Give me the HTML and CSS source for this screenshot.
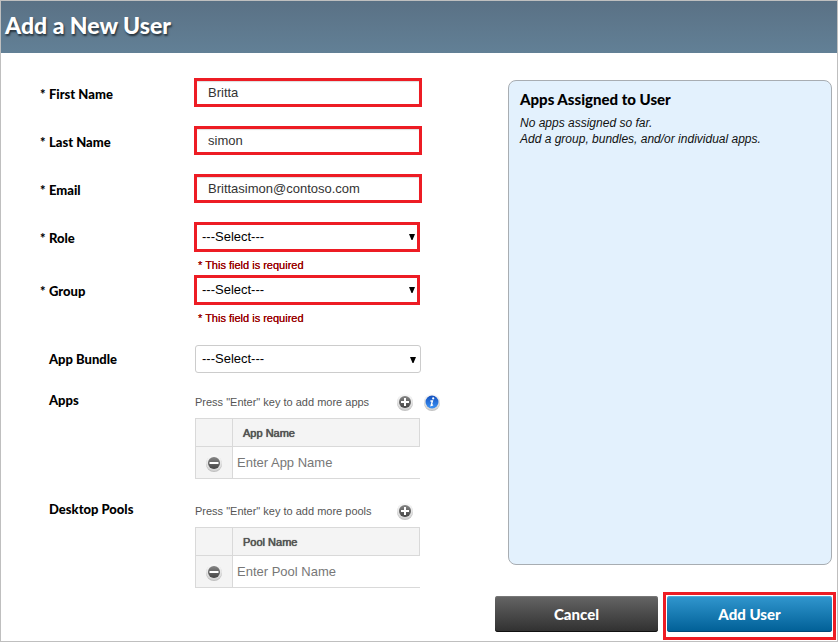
FILE: index.html
```html
<!DOCTYPE html>
<html lang="en">
<head>
<meta charset="utf-8">
<title>Add a New User</title>
<link rel="stylesheet" href="styles.css">
</head>
<body>
<svg class="defs" width="0" height="0" aria-hidden="true">
  <defs>
    <linearGradient id="rim" x1="0" y1="0" x2="0" y2="1"><stop offset="0" stop-color="#fafafa"/><stop offset="1" stop-color="#d2d2d2"/></linearGradient>
    <linearGradient id="dark" x1="0" y1="0" x2="0" y2="1"><stop offset="0" stop-color="#858585"/><stop offset="1" stop-color="#444"/></linearGradient>
    <linearGradient id="blue" x1="0" y1="0" x2="0" y2="1"><stop offset="0" stop-color="#1450bd"/><stop offset="1" stop-color="#3b92f5"/></linearGradient>
    <g id="ring"><circle cx="9" cy="10" r="8" fill="#999" opacity=".6"/><circle cx="9" cy="9" r="8" fill="url(#rim)"/></g>
    <symbol id="plus" viewBox="0 0 18 18"><use href="#ring"/><circle cx="9" cy="9" r="6" fill="url(#dark)"/><path d="M9 5v8M5 9h8" stroke="#fff" stroke-width="2"/></symbol>
    <symbol id="minus" viewBox="0 0 18 18"><use href="#ring"/><circle cx="9" cy="9" r="6" fill="url(#dark)"/><path d="M4.5 9h9" stroke="#fff" stroke-width="2"/></symbol>
    <symbol id="info" viewBox="0 0 18 18"><use href="#ring"/><circle cx="9" cy="9" r="6.5" fill="url(#blue)"/><circle cx="10.2" cy="5.4" r="1.1" fill="#fff"/><path d="M7.4 8h2l-1.2 4.4 1.9-.5" fill="none" stroke="#fff" stroke-width="1.4"/></symbol>
    <symbol id="arrow" viewBox="0 0 6 6"><path d="M0 0h6L3.5 6h-1z"/></symbol>
  </defs>
</svg>
<header class="page-header"><h1>Add a New User</h1></header>
<main class="layout">
  <form class="user-form" id="user-form">
    <div class="row">
      <label for="first"><span class="star">*</span>First Name</label>
      <div class="field"><input class="control marked" id="first" type="text" value="Britta"></div>
    </div>
    <div class="row">
      <label for="last"><span class="star">*</span>Last Name</label>
      <div class="field"><input class="control marked" id="last" type="text" value="simon"></div>
    </div>
    <div class="row">
      <label for="email"><span class="star">*</span>Email</label>
      <div class="field"><input class="control marked" id="email" type="text" value="Brittasimon@contoso.com"></div>
    </div>
    <div class="row">
      <label for="role"><span class="star">*</span>Role</label>
      <div class="field">
        <div class="select"><select class="control marked" id="role"><option>---Select---</option></select><svg class="arrow"><use href="#arrow"/></svg></div>
        <p class="error">* This field is required</p>
      </div>
    </div>
    <div class="row">
      <label for="group"><span class="star">*</span>Group</label>
      <div class="field">
        <div class="select"><select class="control marked" id="group"><option>---Select---</option></select><svg class="arrow"><use href="#arrow"/></svg></div>
        <p class="error">* This field is required</p>
      </div>
    </div>
    <div class="row row-bundle">
      <label for="bundle"><span class="star"></span>App Bundle</label>
      <div class="field">
        <div class="select"><select class="control" id="bundle"><option>---Select---</option></select><svg class="arrow"><use href="#arrow"/></svg></div>
      </div>
    </div>
    <div class="row row-list">
      <label for="app"><span class="star"></span>Apps</label>
      <div class="field">
        <div class="hint"><span class="hint-text">Press "Enter" key to add more apps</span><button type="button" class="icon" aria-label="Add app"><svg><use href="#plus"/></svg></button><button type="button" class="icon" aria-label="About apps"><svg><use href="#info"/></svg></button></div>
        <table class="list">
          <thead><tr><th class="tool"></th><th>App Name</th></tr></thead>
          <tbody><tr><td class="tool"><button type="button" class="icon" aria-label="Remove app"><svg><use href="#minus"/></svg></button></td><td><input id="app" type="text" placeholder="Enter App Name"></td></tr></tbody>
        </table>
      </div>
    </div>
    <div class="row row-list">
      <label for="pool"><span class="star"></span>Desktop Pools</label>
      <div class="field">
        <div class="hint"><span class="hint-text">Press "Enter" key to add more pools</span><button type="button" class="icon" aria-label="Add pool"><svg><use href="#plus"/></svg></button></div>
        <table class="list">
          <thead><tr><th class="tool"></th><th>Pool Name</th></tr></thead>
          <tbody><tr><td class="tool"><button type="button" class="icon" aria-label="Remove pool"><svg><use href="#minus"/></svg></button></td><td><input id="pool" type="text" placeholder="Enter Pool Name"></td></tr></tbody>
        </table>
      </div>
    </div>
  </form>
  <div class="side">
    <section class="panel">
      <h2>Apps Assigned to User</h2>
      <p>No apps assigned so far.<br>Add a group, bundles, and/or individual apps.</p>
    </section>
    <div class="actions">
      <button type="button" class="btn btn-dark">Cancel</button>
      <div class="highlight"><button type="submit" form="user-form" class="btn btn-blue">Add User</button></div>
    </div>
  </div>
</main>
</body>
</html>
```
FILE: styles.css
```css
* { box-sizing: border-box; }

body {
  display: flex;
  flex-direction: column;
  min-height: 100vh;
  margin: 0;
  border: 1px solid #bfbfbf;
  background: #fff;
  color: #000;
  font: 13px/16px "Liberation Sans", Arial, sans-serif;
}

h1, h2, p { margin: 0; }
input, select, button { font: inherit; }
.defs { position: absolute; }

.page-header {
  padding: 10px 4px 14px;
  background: linear-gradient(#5a7185, #628096);
}
.page-header h1 {
  color: #fff;
  font: 900 23px/28px Lato, sans-serif;
  text-shadow: 1px 2px 2px #26333d;
}

.layout { display: flex; flex: 1; }

.user-form { flex: 1; padding: 25px 0 0 39px; }

.row { display: flex; min-height: 48px; }
.row label {
  display: flex;
  width: 154px;
  flex: none;
  padding-top: 8px;
  font: 900 13px/16px Lato, sans-serif;
}
.star { width: 9px; flex: none; }
.field { flex: 1; max-width: 246px; }

.control {
  display: block;
  width: 228px;
  height: 28px;
  padding: 0 11px;
  border: 1px solid #ccc;
  border-radius: 3px;
  background: #fff;
  color: #333;
}
.marked {
  height: 29px;
  border: 3px solid #ed1c24;
  border-radius: 0;
  box-shadow: inset 0 1px 1px #ddd;
}
.select { position: relative; width: 226px; }
.select .control {
  width: 100%;
  appearance: none;
  padding: 0 5px;
  color: #000;
}
.select .marked { height: 30px; box-shadow: none; }
.arrow {
  position: absolute;
  top: 12px;
  right: 5px;
  width: 6px;
  height: 6px;
  pointer-events: none;
}
.error {
  padding: 5px 0 2px 4px;
  color: #900;
  font-size: 11px;
  text-shadow: 0 0 0 currentColor;
}

.row-bundle { padding-top: 17px; }
.row-bundle label { padding-top: 6px; }
.row-bundle .select { margin-left: 1px; }
.row-bundle .control { padding: 0 6px; }

.row-list { min-height: 109px; }
.row-bundle + .row-list { margin-top: 16px; }
.row-list label { padding-top: 0; }
.row-list .field { padding-left: 1px; }
.hint {
  display: flex;
  align-items: center;
  height: 20px;
  margin-bottom: 6px;
  color: #555;
  font-size: 11px;
}
.hint-text { width: 201px; flex: none; }
.icon {
  display: block;
  flex: none;
  width: 18px;
  height: 18px;
  padding: 0;
  border: 0;
  background: none;
}
.icon + .icon { margin-left: 9px; }
.icon svg { display: block; width: 18px; height: 18px; overflow: visible; }

.list {
  width: 225px;
  border-collapse: collapse;
}
.list th, .list td { padding: 0; border: 1px solid #d9d9d9; }
.list th {
  height: 28px;
  padding-left: 10px;
  background: #f4f4f4;
  color: #555;
  font-size: 11px;
  font-weight: normal;
  text-align: left;
  text-shadow: 0 0 0 currentColor, 0 0 1px currentColor;
}
.list td { height: 32px; border-right-color: transparent; }
.list .tool {
  width: 37px;
  padding: 0;
  border-right-color: #d9d9d9;
  background: #f4f4f4;
}
.list .icon { margin: 0 auto; }
.list input {
  display: block;
  width: 100%;
  padding: 0 4px;
  border: 0;
  outline: 0;
  background: none;
}
.list input::placeholder { color: #777; }

.side {
  display: flex;
  flex-direction: column;
  flex: 0 0 341px;
  margin-right: 1px;
  padding: 27px 0 1px;
}
.panel {
  flex: 1;
  margin: 0 4px 27px 13px;
  padding: 9px 11px;
  border: 1px solid #a8adb2;
  border-radius: 8px;
  background: #e3f1fd;
}
.panel h2 { font: 900 15px/18px Lato, sans-serif; }
.panel p {
  margin-top: 7px;
  color: #111;
  font-size: 12px;
  font-style: italic;
}

.actions { display: flex; gap: 5px; }
.actions > .btn { flex: 1; margin-top: 4px; }
.highlight {
  flex: 0 0 173px;
  padding: 1px 1px 5px;
  border: 3px solid #ed1c24;
}
.btn {
  height: 36px;
  border: 0;
  border-radius: 3px;
  color: #fff;
  font: 900 15px/18px Lato, sans-serif;
}
.btn-dark {
  background: linear-gradient(#656565, #303030);
  box-shadow: inset 0 1px #777, inset 0 -1px #111;
}
.btn-blue {
  width: 100%;
  background: linear-gradient(#3197cf, #005f96);
  box-shadow: inset 0 1px #53aadb, inset 0 -1px #004a78;
}
```
